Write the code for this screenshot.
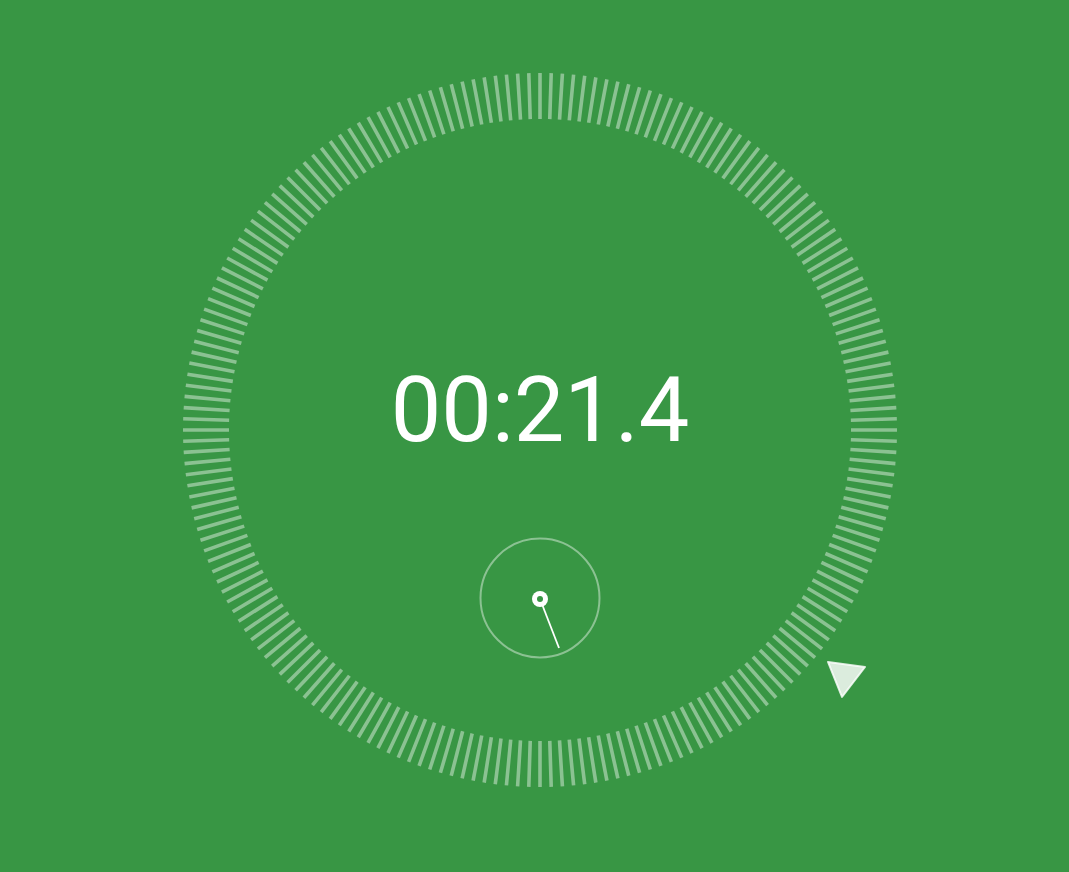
import React from 'react'

const TICKS = 200
const CX = 400
const CY = 400
const R_IN = 311
const R_OUT = 357

function Ticks() {
  const lines = []
  for (let i = 0; i < TICKS; i++) {
    const a = (i / TICKS) * Math.PI * 2
    const s = Math.sin(a)
    const c = Math.cos(a)
    lines.push(
      <line
        key={i}
        x1={CX + s * R_IN}
        y1={CY - c * R_IN}
        x2={CX + s * R_OUT}
        y2={CY - c * R_OUT}
      />
    )
  }
  return (
    <g stroke="#ffffff" strokeOpacity={0.42} strokeWidth={3.6}>
      {lines}
    </g>
  )
}

export default function App() {
  return (
    <div className="h-[872px] w-full overflow-hidden bg-[#389644] pl-[140px] pt-[30px]">
      <div className="relative h-[800px] w-[800px]">
        <svg width="800" height="800" viewBox="0 0 800 800" className="block">
          <Ticks />
          {/* position marker */}
          <polygon
            points="688,632 725,637 702,667"
            fill="#ffffff"
            fillOpacity={0.82}
            stroke="#ffffff"
            strokeOpacity={0.82}
            strokeWidth={2}
            strokeLinejoin="round"
          />
          {/* sub dial */}
          <circle cx={400} cy={568} r={59.5} fill="none" stroke="#ffffff" strokeOpacity={0.42} strokeWidth={2} />
          <line x1={400} y1={569} x2={419} y2={618} stroke="#ffffff" strokeWidth={1.8} />
          <circle cx={400} cy={569} r={8} fill="#ffffff" />
          <circle cx={400} cy={569} r={3} fill="#389644" />
        </svg>
        <div
          className="absolute left-0 right-0 top-[336px] text-center text-[90px] leading-none text-white"
          style={{ fontFamily: 'Roboto, "Liberation Sans", sans-serif' }}
        >
          00:21.4
        </div>
      </div>
    </div>
  )
}
